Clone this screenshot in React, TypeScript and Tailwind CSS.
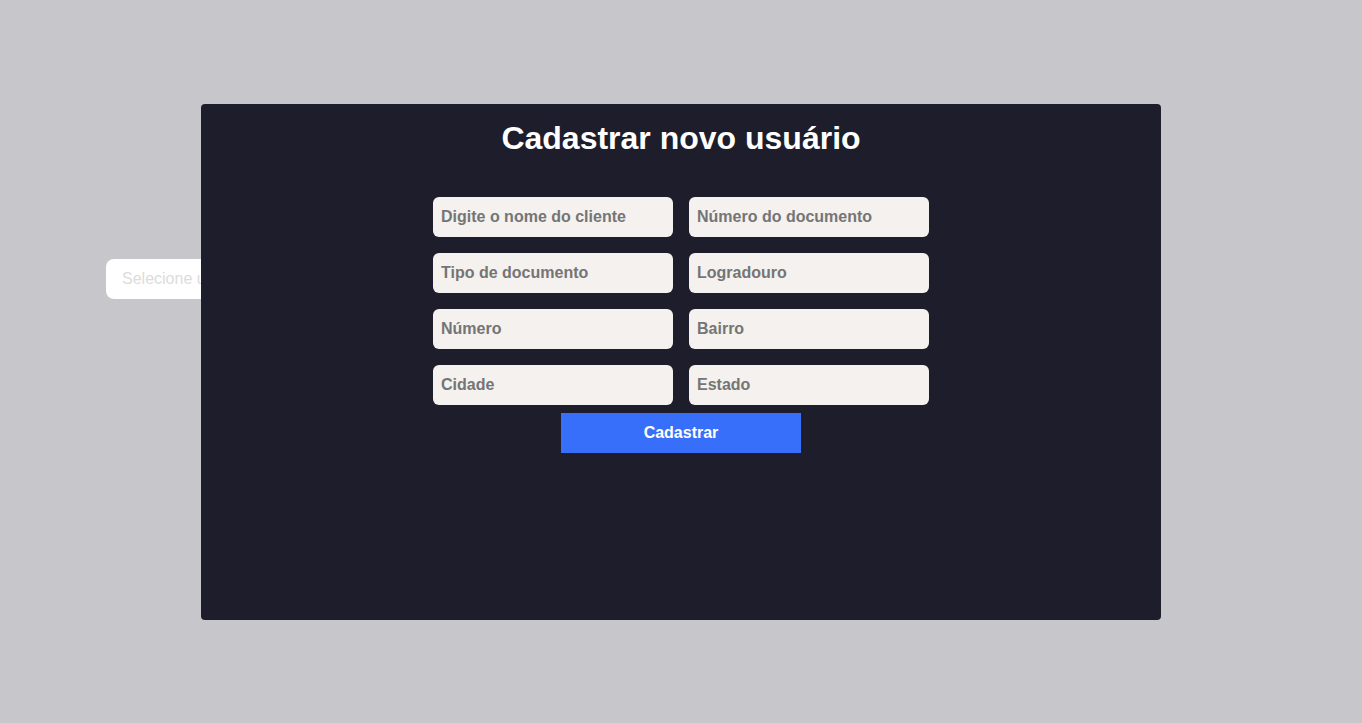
import React from "react";

type Field = { id: string; label: string };

const fields: Field[] = [
  { id: "nome", label: "Digite o nome do cliente" },
  { id: "documento", label: "Número do documento" },
  { id: "tipo", label: "Tipo de documento" },
  { id: "logradouro", label: "Logradouro" },
  { id: "numero", label: "Número" },
  { id: "bairro", label: "Bairro" },
  { id: "cidade", label: "Cidade" },
  { id: "estado", label: "Estado" },
];

const fieldClass =
  "h-10 w-full rounded-md bg-[#f4f1ef] px-2 text-base font-bold text-[#757575] placeholder:text-[#757575] outline-none";

function FormField({ field }: { field: Field }) {
  if (field.id === "tipo") {
    return (
      <select id={field.id} aria-label={field.label} defaultValue="" className={`${fieldClass} appearance-none`}>
        <option value="">{field.label}</option>
        <option value="cpf">CPF</option>
        <option value="cnpj">CNPJ</option>
      </select>
    );
  }
  return <input id={field.id} type="text" aria-label={field.label} placeholder={field.label} className={fieldClass} />;
}

export default function App() {
  return (
    <div className="min-h-screen bg-[#c7c6cb] font-['Liberation_Sans',Arial,sans-serif]">
      <main className="px-[106px] pt-[259px]">
        <input
          type="text"
          aria-label="Selecione um cliente"
          placeholder="Selecione um cliente"
          className="h-10 w-60 rounded-lg bg-white px-4 text-base text-[#dcdcdc] placeholder:text-[#dcdcdc] outline-none"
        />
      </main>
      <div className="fixed inset-0 flex items-center justify-center">
        <section
          role="dialog"
          aria-modal="true"
          aria-labelledby="titulo"
          className="flex min-h-[516px] w-full max-w-[960px] flex-col items-center rounded bg-[#1e1d2c] pt-4"
        >
          <h1 id="titulo" className="text-[32px] leading-[37px] font-bold text-white">
            Cadastrar novo usuário
          </h1>
          <form className="mt-10 flex flex-col items-center gap-2" onSubmit={(e) => e.preventDefault()}>
            <div className="grid grid-cols-[240px_240px] gap-4">
              {fields.map((field) => (
                <FormField key={field.id} field={field} />
              ))}
            </div>
            <button type="submit" className="h-10 w-60 bg-[#386ffa] text-base font-bold text-white">
              Cadastrar
            </button>
          </form>
        </section>
      </div>
    </div>
  );
}
